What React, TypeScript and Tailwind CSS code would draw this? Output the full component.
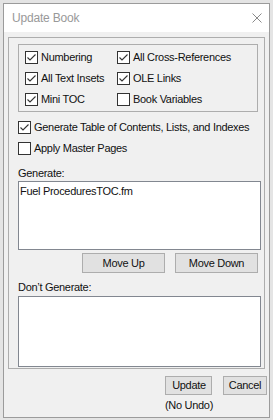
import React from "react";

const font = { fontFamily: "'Liberation Sans', Arial, sans-serif" };

function Box({ checked }: { checked?: boolean }) {
  return (
    <span className="w-[13px] h-[13px] border border-[#333333] bg-white flex-none flex items-center justify-center">
      {checked && (
        <svg width="11" height="11" viewBox="0 0 11 11">
          <polyline points="1.5,5.5 4,8 9.5,2.5" fill="none" stroke="#333333" strokeWidth="1.1" />
        </svg>
      )}
    </span>
  );
}

function Check({ label, checked }: { label: string; checked?: boolean }) {
  return (
    <div className="flex items-center h-[21px] gap-[3px]">
      <Box checked={checked} />
      <span className="leading-none whitespace-nowrap">{label}</span>
    </div>
  );
}

function Btn({ label, w }: { label: string; w: string }) {
  return (
    <div className={`${w} h-full bg-[#e1e1e1] border border-[#adadad] flex items-center justify-center whitespace-nowrap`}>
      {label}
    </div>
  );
}

export default function App() {
  return (
    <div
      className="w-[273px] h-[420px] bg-[#e4e4e4] pt-[3px] pl-[3px] overflow-hidden text-[11px] tracking-[-0.3px] text-[#111111]"
      style={font}
    >
      <div className="w-[267px] h-[415px] border border-[#9b9b9b] bg-[#f0f0f0] flex flex-col">
        <div className="h-[28px] bg-white flex items-center justify-between pl-[8px] pr-[7px]">
          <span className="text-[#999999] text-[12px] tracking-[-0.2px]">Update Book</span>
          <svg width="10" height="10" viewBox="0 0 10 10">
            <line x1="0.5" y1="0.5" x2="9.5" y2="9.5" stroke="#8a8a8a" strokeWidth="1" />
            <line x1="9.5" y1="0.5" x2="0.5" y2="9.5" stroke="#8a8a8a" strokeWidth="1" />
          </svg>
        </div>
        <div className="mt-[5px] ml-[4px] w-[257px] h-[332px] border border-[#adadad] pl-[9px] flex flex-col">
          <div className="mt-[6px] w-[240px] border border-[#adadad] pl-[6px] pt-[2px] pb-[1px] grid grid-cols-[92px_1fr]">
            <Check label="Numbering" checked />
            <Check label="All Cross-References" checked />
            <Check label="All Text Insets" checked />
            <Check label="OLE Links" checked />
            <Check label="Mini TOC" checked />
            <Check label="Book Variables" />
          </div>
          <div className="mt-[5px]">
            <Check label="Generate Table of Contents, Lists, and Indexes" checked />
            <Check label="Apply Master Pages" />
          </div>
          <div className="mt-[6px] h-[16px] leading-[16px]">Generate:</div>
          <div className="w-[243px] h-[69px] border border-[#828790] bg-white pl-[1px] pt-[1px]">
            <div className="leading-[17px]">Fuel ProceduresTOC.fm</div>
          </div>
          <div className="mt-[3px] w-[243px] h-[20px] flex justify-end gap-[10px] pr-[3px]">
            <Btn label="Move Up" w="w-[83px]" />
            <Btn label="Move Down" w="w-[83px]" />
          </div>
          <div className="mt-[6px] h-[16px] leading-[16px]">Don’t Generate:</div>
          <div className="mt-[1px] w-[243px] h-[71px] border border-[#828790] bg-white"></div>
        </div>
        <div className="mt-[7px] flex justify-end pr-[2px]">
          <div className="flex flex-col items-center">
            <div className="h-[19px] flex">
              <Btn label="Update" w="w-[47px]" />
            </div>
            <div className="mt-[2px] leading-[16px]">(No Undo)</div>
          </div>
          <div className="ml-[10px] h-[19px] flex">
            <Btn label="Cancel" w="w-[44px]" />
          </div>
        </div>
      </div>
    </div>
  );
}
